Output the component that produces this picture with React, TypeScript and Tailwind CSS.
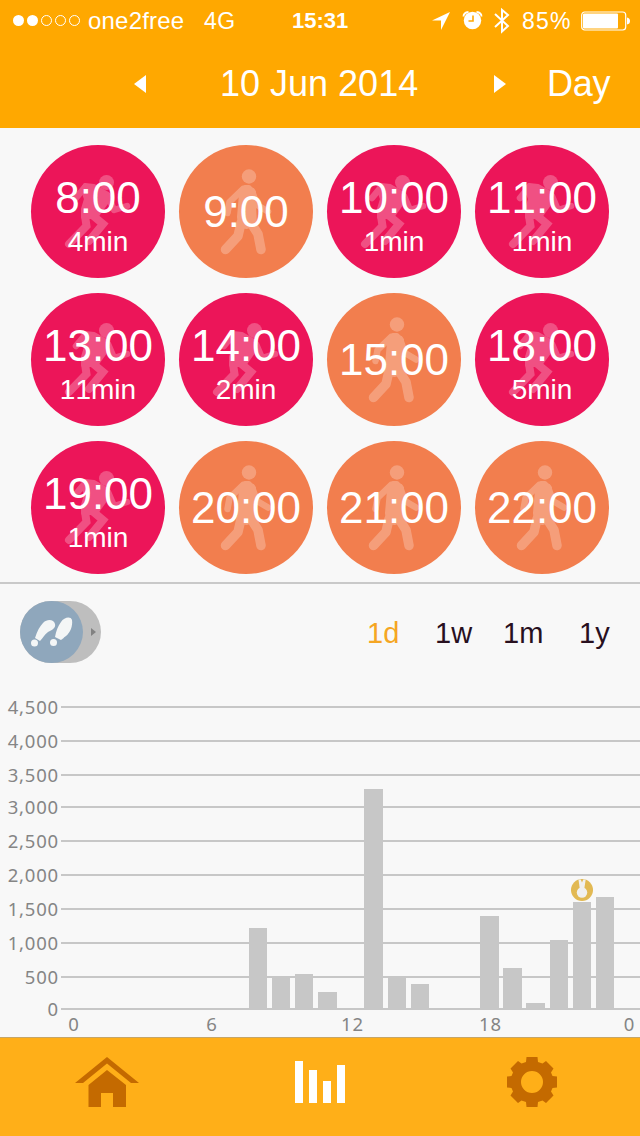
import React from "react";

type Hour = { time: string; min?: string };

const hours: Hour[] = [
  { time: "8:00", min: "4min" },
  { time: "9:00" },
  { time: "10:00", min: "1min" },
  { time: "11:00", min: "1min" },
  { time: "13:00", min: "11min" },
  { time: "14:00", min: "2min" },
  { time: "15:00" },
  { time: "18:00", min: "5min" },
  { time: "19:00", min: "1min" },
  { time: "20:00" },
  { time: "21:00" },
  { time: "22:00" },
];

function Runner() {
  return (
    <svg viewBox="0 0 134 133" className="absolute inset-0 h-full w-full" aria-hidden="true">
      <g opacity=".25" fill="#fff" stroke="#fff" strokeLinecap="round" strokeLinejoin="round">
        <circle cx="75.5" cy="37.5" r="7.5" stroke="none" />
        <path d="M54 40l9 1 14 8 1 5-8 11-5 7H52v-8l3-10-3-9z" strokeWidth="4" />
        <path d="M54 42l-9 11M77 51l6 14 13-4" fill="none" strokeWidth="6.5" />
        <path d="M54 71l1.500 10L38 99M60 69l12 10-14 17" fill="none" strokeWidth="8" strokeLinejoin="miter" />
      </g>
    </svg>
  );
}

function Walker() {
  return (
    <svg viewBox="0 0 134 133" className="absolute inset-0 h-full w-full" aria-hidden="true">
      <g opacity=".25" fill="#fff" stroke="#fff" strokeLinecap="round" strokeLinejoin="round">
        <circle cx="70" cy="31.5" r="7.2" stroke="none" />
        <path d="M66 42h4l5 5v14l1 18-8 3-7-1-1-9 2-23z" strokeWidth="4" />
        <path d="M64 44L50.500 57l-2 11M73 46l5 14 11 6.500" fill="none" strokeWidth="6.500" />
        <path d="M62 78l-3 13-12.500 13.500M72 78l7 11 3 15.500" fill="none" strokeWidth="9.500" />
      </g>
    </svg>
  );
}

function HourCircle({ time, min }: Hour) {
  return (
    <div
      className={
        min
          ? "relative flex h-[133px] w-[134px] flex-col items-center rounded-[50%] bg-[#ec1559] pt-[31px] text-white"
          : "relative flex h-[133px] w-[134px] flex-col items-center rounded-[50%] bg-[#f27e4e] pt-[45px] text-white"
      }
    >
      {min ? <Runner /> : <Walker />}
      <span className="relative text-[44px] leading-[44px]">{time}</span>
      {min && <span className="relative mt-[8px] text-[28px] leading-[28px]">{min}</span>}
    </div>
  );
}

function StatusBar() {
  return (
    <div className="flex h-10 items-center pt-[2px] text-2xl leading-[38px]">
      <svg width="69" height="14" viewBox="0 0 69 14" className="ml-3 shrink-0" fill="none" stroke="#fff">
        <circle cx="6.500" cy="6.500" r="5.500" fill="#fff" stroke="none" />
        <circle cx="20.500" cy="6.500" r="5.500" fill="#fff" stroke="none" />
        <circle cx="34.500" cy="6.500" r="5" />
        <circle cx="48.500" cy="6.500" r="5" />
        <circle cx="62.500" cy="6.500" r="5" />
      </svg>
      <span className="ml-[7px] w-[116px] tracking-[0.2px]">one2free</span>
      <span className="w-[88px] text-[23px] tracking-[0.4px]">4G</span>
      <span className="w-[140px] text-[22px] font-bold">15:31</span>
      <svg width="82" height="32" viewBox="0 0 82 32" className="shrink-0" fill="none">
        <path d="M18 7L0 15.500h9V25z" fill="#fff" />
        <circle cx="40.500" cy="15.500" r="8.700" fill="#fff" />
        <path d="M31.500 11.500q0-4 5-4.500M49.500 11.500q0-4-5-4.500" stroke="#fff" strokeWidth="1.800" />
        <path d="M41 10.500v5.500h-4.500" stroke="#ffa800" strokeWidth="1.600" />
        <path d="M63 9l13 12-6 5.500V5l6 5L63 22" stroke="#fff" strokeWidth="2" />
      </svg>
      <span className="ml-[8px] w-[59px] text-[23px] tracking-[1.200px]">85%</span>
      <svg width="50" height="20" viewBox="0 0 50 20" className="shrink-0">
        <rect x="0.700" y="1" width="44" height="18" rx="3" fill="none" stroke="#fff" strokeWidth="1.200" />
        <rect x="2" y="2.500" width="35" height="15" rx="1" fill="#fff" />
        <path d="M46 6.500q3 .5 3 3.500t-3 3.500z" fill="#fff" />
      </svg>
    </div>
  );
}

const gridLines: [string, number][] = [
  ["4,500", 36],
  ["4,000", 70],
  ["3,500", 104],
  ["3,000", 136],
  ["2,500", 170],
  ["2,000", 204],
  ["1,500", 238],
  ["1,000", 272],
  ["500", 306],
  ["0", 338],
];

const bars: [number, number, number][] = [
  [249, 18, 257],
  [272, 18, 306],
  [295, 18, 303],
  [318, 19, 321],
  [364, 19, 118],
  [388, 18, 306],
  [411, 18, 313],
  [480, 19, 245],
  [503, 19, 297],
  [526, 19, 332],
  [550, 18, 269],
  [573, 18, 231],
  [596, 18, 226],
];

const hourLabels: [string, number][] = [
  ["0", 74],
  ["6", 212],
  ["12", 352.5],
  ["18", 490.5],
  ["0", 629.500],
];

function StepsChart() {
  return (
    <svg
      width="640"
      height="366"
      viewBox="0 0 640 366"
      className="block shrink-0 font-['Noto_Sans',sans-serif] text-[18.5px] tracking-[0.8px]"
      fill="#858585"
    >
      {gridLines.map(([label, y]) => (
        <g key={label}>
          <rect x="61" y={y - 1} width="579" height="2" fill="#c7c7c7" />
          <text x="59" y={y + 7} textAnchor="end">
            {label}
          </text>
        </g>
      ))}
      {bars.map(([x, w, y]) => (
        <rect key={x} x={x} y={y} width={w} height={338 - y} fill="#c7c7c7" />
      ))}
      <circle cx="582" cy="219" r="11" fill="#e2b953" />
      <path d="M578.500 208.500h2.200l1.300 3 1.300-3h2.400l-1.700 11h-4z" fill="#f0f0f0" />
      <circle cx="582" cy="221.500" r="5.200" fill="#f0f0f0" />
      {hourLabels.map(([label, x]) => (
        <text key={x} x={x} y="360" textAnchor="middle">
          {label}
        </text>
      ))}
    </svg>
  );
}

export default function App() {
  return (
    <div className="flex h-[1136px] w-[640px] flex-col overflow-hidden bg-[#f8f8f8] font-['Liberation_Sans',Arial,sans-serif] [font-kerning:none]">
      <header className="h-32 shrink-0 bg-[#ffa800] text-white">
        <StatusBar />
        <div className="flex h-[88px] items-center text-4xl leading-[88px]">
          <svg width="12" height="18" viewBox="0 0 12 18" className="ml-[134px] shrink-0">
            <path d="M12 0v18L0 9z" fill="#fff" />
          </svg>
          <span className="ml-[74px] w-[274px]">10 Jun 2014</span>
          <svg width="12" height="18" viewBox="0 0 12 18" className="shrink-0">
            <path d="M0 0v18l12-9z" fill="#fff" />
          </svg>
          <span className="ml-[41px] tracking-[-0.3px]">Day</span>
        </div>
      </header>

      <main className="flex h-[909px] shrink-0 flex-col">
        <section className="grid h-[454px] shrink-0 grid-cols-[repeat(4,134px)] content-start gap-x-[14px] gap-y-[15px] pt-[17px] pl-[31px]">
          {hours.map((h) => (
            <HourCircle key={h.time} {...h} />
          ))}
        </section>

        <section className="flex h-[89px] shrink-0 items-start border-t-2 border-[#c9c9c9] pt-[17px] pl-5">
          <div className="flex h-[62px] w-[81px] items-center rounded-full bg-[#bebebe]">
            <div className="flex h-[62px] w-[63px] rounded-[50%] bg-[#8fa7bc]">
              <svg width="63" height="62" viewBox="0 0 63 62" fill="#f4f6f6">
                <path d="M15 37c2-7 5-12 8-15 5-5 11-3 12 1 1 4-3 6-7 8-4 3-5 6-8 9z" />
                <path d="M35 36c1-6 3-11 6-15 3-5 10-6 11-2 1 6-2 13-6 16-3 2-3 3-5 4z" />
                <circle cx="14.500" cy="42" r="3.500" />
                <circle cx="33.500" cy="41.500" r="3.500" />
              </svg>
            </div>
            <svg width="5" height="8" viewBox="0 0 5 8" className="ml-2">
              <path d="M0 0v8l5-4z" fill="#828282" />
            </svg>
          </div>
          <div className="ml-[266px] flex pt-[14px] text-[29px] leading-[36px] text-[#28101f]">
            <span className="w-[68px] text-[#f5a623]">1d</span>
            <span className="w-[68px]">1w</span>
            <span className="w-[76px]">1m</span>
            <span>1y</span>
          </div>
        </section>

        <StepsChart />
      </main>

      <footer className="flex h-[99px] shrink-0 items-start border-t border-[#c5a668] bg-[#ffaf18] pt-[19px]">
        <svg width="64" height="50" viewBox="0 0 64 50" className="ml-[75px] shrink-0" fill="#c46a00">
          <path d="M32 0l32 26h-8L32 6.500 8 26H0z" />
          <path d="M32 13l19 15v22H38V36H26v14H13.500V28z" />
        </svg>
        <svg width="50" height="50" viewBox="0 0 50 50" className="ml-[156px] shrink-0" fill="#fff">
          <path d="M0 4h8v42H0zM14 13h8v33h-8zM28 24h8v22h-8zM42 8h8v38h-8z" />
        </svg>
        <svg width="50" height="50" viewBox="0 0 50 50" className="ml-[162px] shrink-0" fill="#c46a00">
          <path
            fillRule="evenodd"
            d="M19.500 0h11l.5 5 4.500 1.500L39 4l7.500 7.500-2.500 4 1.500 3.500 4.500.5v11l-4.500.5-1.500 3.500 2.500 4L39 46l-3.500-2.500L31 45l-.5 5h-11l-.5-5-4.500-1.500L11 46l-7.500-7.500 2.500-4L4.500 31 0 30.500v-11l4.500-.5L6 15.500l-2.500-4L11 4l3.500 2.500L19 5zM25 14a11 11 0 1 0 0 22 11 11 0 0 0 0-22z"
          />
        </svg>
      </footer>
    </div>
  );
}
